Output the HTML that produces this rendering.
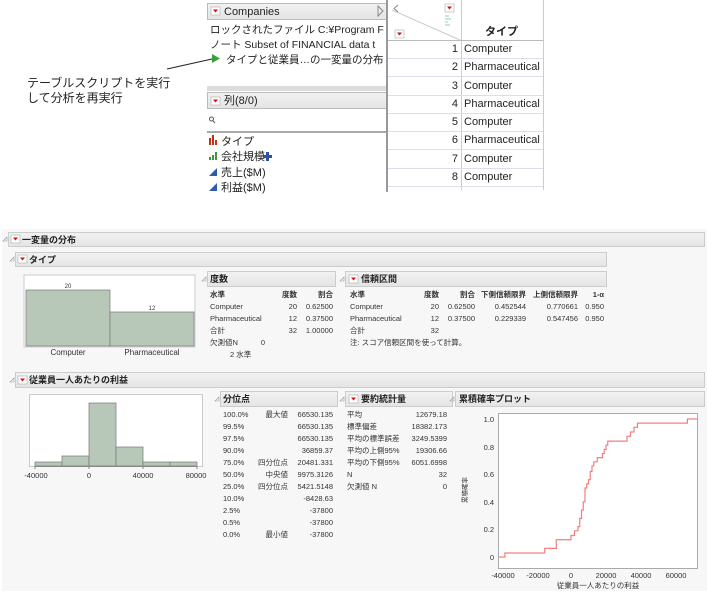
<!DOCTYPE html>
<html><head><meta charset="utf-8"><style>
body{margin:0;background:#fff;}
svg text{font-family:"Liberation Sans","Noto Sans CJK JP",sans-serif;}
</style></head><body>
<svg width="707" height="593" viewBox="0 0 707 593" xmlns="http://www.w3.org/2000/svg">
<defs>
<linearGradient id="hg" x1="0" y1="0" x2="0" y2="1"><stop offset="0" stop-color="#f2f2f2"/><stop offset="1" stop-color="#e4e4e4"/></linearGradient>
<g id="dd"><rect x="0" y="0" width="9" height="8" fill="#fff" stroke="#aaa" stroke-width="0.6"/><path d="M2 2.5 L7 2.5 L4.5 5.5Z" fill="#d01010"/></g>
<g id="tri"><path d="M0 5 L4 1 L4 5Z" fill="none" stroke="#999" stroke-width="0.6"/></g>
<clipPath id="lp"><rect x="207" y="0" width="179" height="192"/></clipPath>
</defs>

<!-- top left panel -->
<rect x="207" y="0" width="181" height="192" fill="#fff"/>
<rect x="207.5" y="3.5" width="179" height="16" fill="url(#hg)" stroke="#bbb"/>
<use href="#dd" x="211" y="7"/>
<text x="224" y="15" font-size="11" fill="#222">Companies</text>
<path d="M378 6 L383 11 L378 16Z" fill="none" stroke="#888"/>
<g clip-path="url(#lp)">
<text x="210" y="33" font-size="10.5" fill="#222">ロックされたファイル  C:¥Program F</text>
<text x="210" y="48" font-size="10.5" fill="#222">ノート  Subset of FINANCIAL data t</text>
<text x="226" y="63" font-size="10.5" fill="#222">タイプと従業員…の一変量の分布</text>
</g>
<path d="M212 54 L220 58.5 L212 63Z" fill="#3aa03a"/>
<rect x="207" y="86" width="181" height="5" fill="#ddd"/>
<rect x="207.5" y="92.5" width="179" height="16" fill="url(#hg)" stroke="#bbb"/>
<use href="#dd" x="211" y="97"/>
<text x="224" y="104" font-size="11" fill="#222">列(8/0)</text>
<circle cx="211.5" cy="119" r="2" fill="none" stroke="#555"/><path d="M213 121 L215 123" stroke="#555"/>
<line x1="207" y1="132" x2="386" y2="132" stroke="#555"/>
<rect x="209" y="138" width="2" height="7" fill="#c03018"/><rect x="212" y="135" width="2" height="10" fill="#c03018"/><rect x="215" y="140" width="2" height="5" fill="#c03018"/>
<text x="221" y="145" font-size="11" fill="#222">タイプ</text>
<rect x="209" y="157" width="2" height="3" fill="#3a9a3a"/><rect x="212" y="155" width="2" height="5" fill="#3a9a3a"/><rect x="215" y="152" width="2" height="8" fill="#3a9a3a"/>
<text x="221" y="160" font-size="11" fill="#222">会社規模</text>
<path d="M266 152 h3 v3 h3 v3 h-3 v3 h-3 v-3 h-3 v-3 h3Z" fill="#3050a0"/>
<path d="M209 176 L217 168 L217 176Z" fill="#2a5db0"/>
<text x="221" y="176" font-size="11" fill="#222">売上($M)</text>
<path d="M209 191 L217 183 L217 191Z" fill="#2a5db0"/>
<text x="221" y="191" font-size="11" fill="#222">利益($M)</text>
<line x1="387" y1="0" x2="387" y2="192" stroke="#999" stroke-width="2"/>

<!-- table -->
<line x1="392" y1="10" x2="460" y2="40" stroke="#ccc"/>
<path d="M398 5 L394 8.5 L398 12" fill="none" stroke="#888"/>
<use href="#dd" x="445" y="4"/>
<use href="#dd" x="395" y="30"/>
<path d="M445 16h4M445 19h6M445 22h3M445 25h5" stroke="#9cb" stroke-width="1"/>
<line x1="461.5" y1="0" x2="461.5" y2="190" stroke="#ccc"/>
<line x1="543.5" y1="0" x2="543.5" y2="190" stroke="#ccc"/>
<text x="485" y="35" font-size="11" font-weight="bold" fill="#222">タイプ</text>
<line x1="388" y1="40.5" x2="543" y2="40.5" stroke="#bbb"/>
<g font-size="11" fill="#222">
<text x="458" y="52" text-anchor="end">1</text><text x="464" y="52">Computer</text>
<text x="458" y="70" text-anchor="end">2</text><text x="464" y="70">Pharmaceutical</text>
<text x="458" y="89" text-anchor="end">3</text><text x="464" y="89">Computer</text>
<text x="458" y="107" text-anchor="end">4</text><text x="464" y="107">Pharmaceutical</text>
<text x="458" y="125" text-anchor="end">5</text><text x="464" y="125">Computer</text>
<text x="458" y="143" text-anchor="end">6</text><text x="464" y="143">Pharmaceutical</text>
<text x="458" y="162" text-anchor="end">7</text><text x="464" y="162">Computer</text>
<text x="458" y="180" text-anchor="end">8</text><text x="464" y="180">Computer</text>
</g>
<g stroke="#dde" stroke-width="1">
<line x1="388" y1="58.5" x2="543" y2="58.5"/><line x1="388" y1="76.5" x2="543" y2="76.5"/><line x1="388" y1="95.5" x2="543" y2="95.5"/><line x1="388" y1="113.5" x2="543" y2="113.5"/><line x1="388" y1="131.5" x2="543" y2="131.5"/><line x1="388" y1="149.5" x2="543" y2="149.5"/><line x1="388" y1="168.5" x2="543" y2="168.5"/><line x1="388" y1="186.5" x2="543" y2="186.5"/>
</g>

<!-- callout -->
<line x1="167" y1="69" x2="212" y2="59" stroke="#222"/>
<text x="27" y="87" font-size="12" fill="#222">テーブルスクリプトを実行</text>
<text x="27" y="102" font-size="12" fill="#222">して分析を再実行</text>

<!-- lower report -->
<rect x="2" y="229" width="705" height="362" fill="#f7f7f7"/>
<rect x="8.5" y="232.5" width="696" height="14" fill="url(#hg)" stroke="#ccc"/>
<use href="#tri" x="3" y="236"/><use href="#dd" x="11" y="235"/>
<text x="22" y="243" font-size="9" font-weight="bold" fill="#222">一変量の分布</text>

<rect x="15.5" y="252.5" width="591" height="14" fill="url(#hg)" stroke="#ccc"/>
<use href="#tri" x="10" y="256"/><use href="#dd" x="18" y="255"/>
<text x="29" y="263" font-size="9" font-weight="bold" fill="#222">タイプ</text>

<rect x="24" y="275" width="171" height="72" fill="#fff" stroke="#ccc"/>
<rect x="26" y="290" width="84" height="56" fill="#b8c8b8" stroke="#777" stroke-width="0.7"/>
<rect x="110" y="312" width="84" height="34" fill="#b8c8b8" stroke="#777" stroke-width="0.7"/>
<text x="68" y="288" font-size="6" text-anchor="middle" fill="#333">20</text>
<text x="152" y="310" font-size="6" text-anchor="middle" fill="#333">12</text>
<text x="68" y="355" font-size="8" text-anchor="middle" fill="#333">Computer</text>
<text x="152" y="355" font-size="8" text-anchor="middle" fill="#333">Pharmaceutical</text>

<rect x="207.5" y="271.5" width="128" height="15" fill="url(#hg)" stroke="#ccc"/>
<use href="#tri" x="202" y="276"/>
<text x="210" y="282" font-size="9" font-weight="bold" fill="#222">度数</text>
<g font-size="7.5" fill="#333">
<text x="210" y="297" font-weight="bold">水準</text><text x="297" y="297" text-anchor="end" font-weight="bold">度数</text><text x="333" y="297" text-anchor="end" font-weight="bold">割合</text>
<text x="210" y="309">Computer</text><text x="297" y="309" text-anchor="end">20</text><text x="333" y="309" text-anchor="end">0.62500</text>
<text x="210" y="321">Pharmaceutical</text><text x="297" y="321" text-anchor="end">12</text><text x="333" y="321" text-anchor="end">0.37500</text>
<text x="210" y="333">合計</text><text x="297" y="333" text-anchor="end">32</text><text x="333" y="333" text-anchor="end">1.00000</text>
<text x="210" y="345">欠測値N</text><text x="265" y="345" text-anchor="end">0</text>
<text x="230" y="357">2  水準</text>
</g>

<rect x="345.5" y="271.5" width="261" height="15" fill="url(#hg)" stroke="#ccc"/>
<use href="#tri" x="340" y="276"/><use href="#dd" x="349" y="275"/>
<text x="361" y="282" font-size="9" font-weight="bold" fill="#222">信頼区間</text>
<g font-size="7.5" fill="#333">
<g font-weight="bold"><text x="350" y="297">水準</text><text x="439" y="297" text-anchor="end">度数</text><text x="475" y="297" text-anchor="end">割合</text><text x="526" y="297" text-anchor="end">下側信頼限界</text><text x="578" y="297" text-anchor="end">上側信頼限界</text><text x="604" y="297" text-anchor="end">1-α</text></g>
<text x="350" y="309">Computer</text><text x="439" y="309" text-anchor="end">20</text><text x="475" y="309" text-anchor="end">0.62500</text><text x="526" y="309" text-anchor="end">0.452544</text><text x="578" y="309" text-anchor="end">0.770661</text><text x="604" y="309" text-anchor="end">0.950</text>
<text x="350" y="321">Pharmaceutical</text><text x="439" y="321" text-anchor="end">12</text><text x="475" y="321" text-anchor="end">0.37500</text><text x="526" y="321" text-anchor="end">0.229339</text><text x="578" y="321" text-anchor="end">0.547456</text><text x="604" y="321" text-anchor="end">0.950</text>
<text x="350" y="333">合計</text><text x="439" y="333" text-anchor="end">32</text>
<text x="350" y="345">注: スコア信頼区間を使って計算。</text>
</g>

<!-- second -->
<rect x="15.5" y="372.5" width="689" height="15" fill="url(#hg)" stroke="#ccc"/>
<use href="#tri" x="10" y="377"/><use href="#dd" x="18" y="376"/>
<text x="29" y="383" font-size="9" font-weight="bold" fill="#222">従業員一人あたりの利益</text>

<rect x="29.5" y="394.5" width="173" height="72" fill="#fff" stroke="#ccc"/>
<g fill="#b8c8b8" stroke="#777" stroke-width="0.7">
<rect x="35" y="462" width="27" height="4"/><rect x="62" y="456" width="27" height="10"/><rect x="89" y="403" width="27" height="63"/><rect x="116" y="447" width="27" height="19"/><rect x="143" y="462" width="27" height="4"/><rect x="170" y="462" width="27" height="4"/>
</g>
<line x1="35" y1="466.5" x2="197" y2="466.5" stroke="#888"/>
<path d="M35 466v3M89 466v3M143 466v3M197 466v3" stroke="#888"/>
<g font-size="7.5" fill="#333" text-anchor="middle"><text x="36" y="478">-40000</text><text x="89" y="478">0</text><text x="143" y="478">40000</text><text x="196" y="478">80000</text></g>

<rect x="220.5" y="391.5" width="117" height="15" fill="url(#hg)" stroke="#ccc"/>
<use href="#tri" x="215" y="396"/>
<text x="223" y="402" font-size="9" font-weight="bold" fill="#222">分位点</text>
<g font-size="7.5" fill="#333">
<text x="223" y="417">100.0%</text><text x="288" y="417" text-anchor="end">最大値</text><text x="333" y="417" text-anchor="end">66530.135</text>
<text x="223" y="429">99.5%</text><text x="333" y="429" text-anchor="end">66530.135</text>
<text x="223" y="441">97.5%</text><text x="333" y="441" text-anchor="end">66530.135</text>
<text x="223" y="453">90.0%</text><text x="333" y="453" text-anchor="end">36859.37</text>
<text x="223" y="465">75.0%</text><text x="288" y="465" text-anchor="end">四分位点</text><text x="333" y="465" text-anchor="end">20481.331</text>
<text x="223" y="477">50.0%</text><text x="288" y="477" text-anchor="end">中央値</text><text x="333" y="477" text-anchor="end">9975.3126</text>
<text x="223" y="489">25.0%</text><text x="288" y="489" text-anchor="end">四分位点</text><text x="333" y="489" text-anchor="end">5421.5148</text>
<text x="223" y="501">10.0%</text><text x="333" y="501" text-anchor="end">-8428.63</text>
<text x="223" y="513">2.5%</text><text x="333" y="513" text-anchor="end">-37800</text>
<text x="223" y="525">0.5%</text><text x="333" y="525" text-anchor="end">-37800</text>
<text x="223" y="537">0.0%</text><text x="288" y="537" text-anchor="end">最小値</text><text x="333" y="537" text-anchor="end">-37800</text>
</g>

<rect x="345.5" y="391.5" width="107" height="15" fill="url(#hg)" stroke="#ccc"/>
<use href="#tri" x="340" y="396"/><use href="#dd" x="349" y="395"/>
<text x="361" y="402" font-size="9" font-weight="bold" fill="#222">要約統計量</text>
<g font-size="7.5" fill="#333">
<text x="347" y="417">平均</text><text x="447" y="417" text-anchor="end">12679.18</text>
<text x="347" y="429">標準偏差</text><text x="447" y="429" text-anchor="end">18382.173</text>
<text x="347" y="441">平均の標準誤差</text><text x="447" y="441" text-anchor="end">3249.5399</text>
<text x="347" y="453">平均の上側95%</text><text x="447" y="453" text-anchor="end">19306.66</text>
<text x="347" y="465">平均の下側95%</text><text x="447" y="465" text-anchor="end">6051.6998</text>
<text x="347" y="477">N</text><text x="447" y="477" text-anchor="end">32</text>
<text x="347" y="489">欠測値 N</text><text x="447" y="489" text-anchor="end">0</text>
</g>

<rect x="455.5" y="391.5" width="249" height="15" fill="url(#hg)" stroke="#ccc"/>
<use href="#tri" x="450" y="396"/>
<text x="459" y="402" font-size="9" font-weight="bold" fill="#222">累積確率プロット</text>

<rect x="498.5" y="413.5" width="199" height="155" fill="#fff" stroke="#aaa"/>
<polyline fill="none" stroke="#f08080" stroke-width="1.2" points="499,557 504.9,557 504.9,553 544.75,553 544.75,548.4 556.3,548.4 556.3,539.75 571,539.75 571,535.5 574.5,535.5 574.5,530.8 578,530.8 578,526.6 579.75,526.6 579.75,518.4 581.5,518.4 581.5,510 583.25,510 583.25,501.8 585,501.8 585,488 586.75,488 586.75,483.9 588.5,483.9 588.5,479.7 590.25,479.7 590.25,471.4 592,471.4 592,465.9 593.75,465.9 593.75,461.8 597.25,461.8 597.25,457.6 602.5,457.6 602.5,453.5 604.25,453.5 604.25,449.4 606,449.4 606,445.2 607.75,445.2 607.75,441.1 627,441.1 627,436.25 630.5,436.25 630.5,432 634,432 634,427.3 637.5,427.3 637.5,423.1 687.4,423.1 687.4,419 697,419"/>
<g font-size="7.5" fill="#333" text-anchor="end">
<text x="494" y="422">1.0</text><text x="494" y="450">0.8</text><text x="494" y="477">0.6</text><text x="494" y="505">0.4</text><text x="494" y="532">0.2</text><text x="494" y="560">0</text>
</g>
<g font-size="7.5" fill="#333" text-anchor="middle">
<text x="503" y="578">-40000</text><text x="538" y="578">-20000</text><text x="571" y="578">0</text><text x="606" y="578">20000</text><text x="641" y="578">40000</text><text x="676" y="578">60000</text>
</g>
<text x="598" y="588" font-size="7.5" fill="#333" text-anchor="middle">従業員一人あたりの利益</text>
<text transform="translate(467,490) rotate(-90)" font-size="6.5" fill="#333" text-anchor="middle">累積確率</text>
</svg>
</body></html>
